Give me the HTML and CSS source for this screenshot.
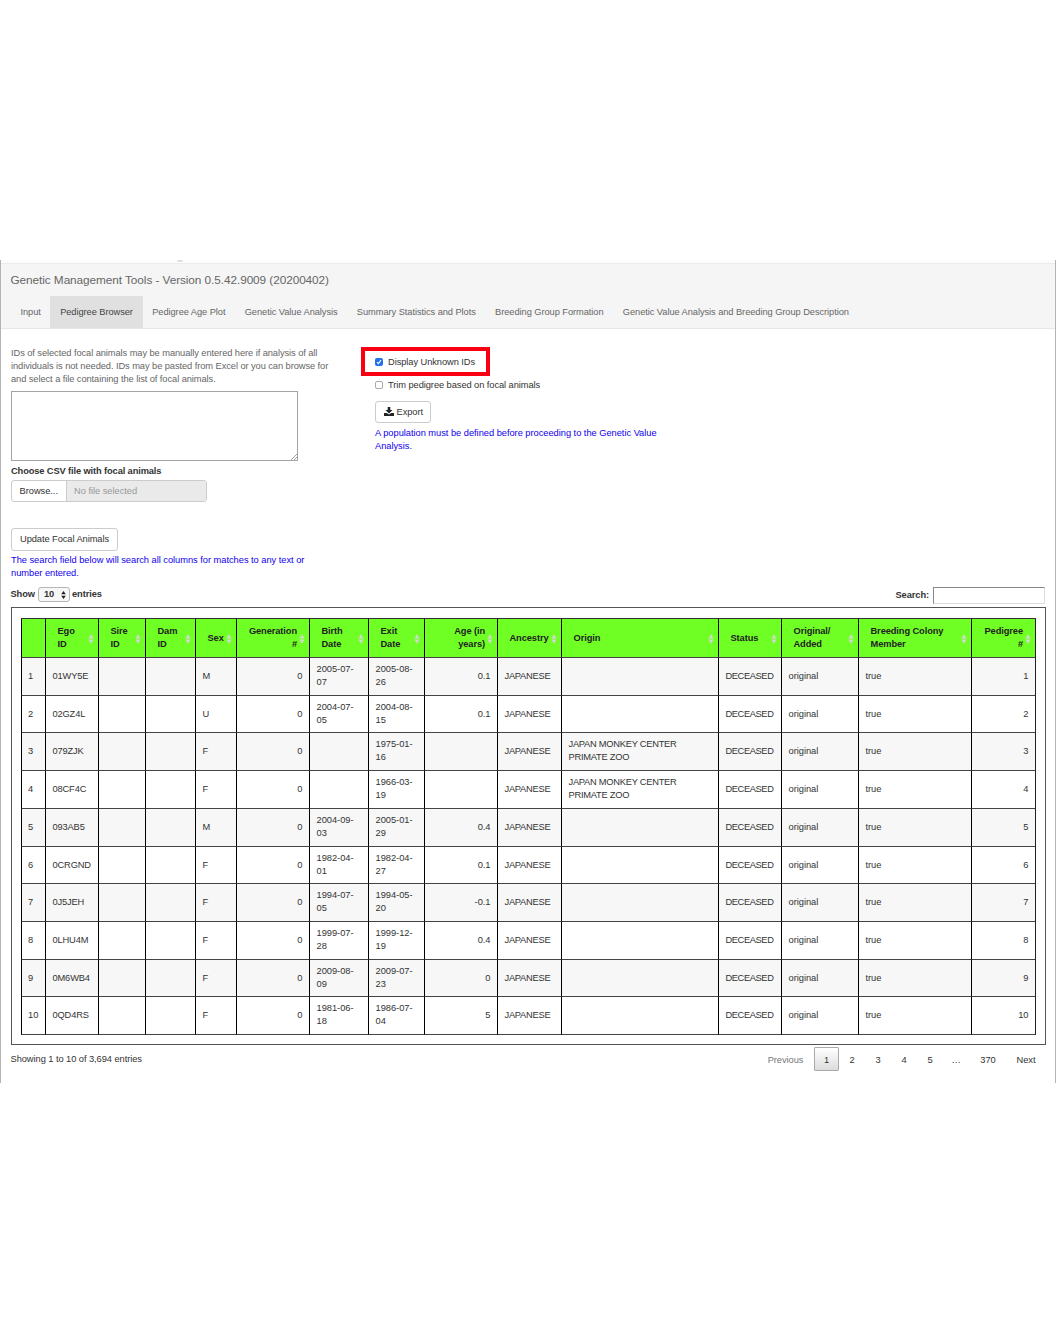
FILE: index.html
```html
<!DOCTYPE html>
<html lang="en">
<head>
<meta charset="utf-8">
<title>Genetic Management Tools</title>
<link rel="stylesheet" href="styles.css">
</head>
<body>
<svg class="defs" width="0" height="0"><symbol id="sort" viewBox="0 0 6 10"><path d="M3 .3 5.6 4.4H.4zM3 9.7 5.6 5.6H.4z" fill="#d3d8cf"/></symbol></svg>
<div class="window">
<div class="toolbar"><i></i></div>
<header class="navbar">
<div class="brand">Genetic Management Tools - Version 0.5.42.9009 (20200402)</div>
<nav class="tabs"><a>Input</a><a class="active">Pedigree Browser</a><a>Pedigree Age Plot</a><a>Genetic Value Analysis</a><a>Summary Statistics and Plots</a><a>Breeding Group Formation</a><a>Genetic Value Analysis and Breeding Group Description</a></nav>
</header>
<section class="controls">
<div class="left">
<p class="help">IDs of selected focal animals may be manually entered here if analysis of all<br>individuals is not needed. IDs may be pasted from Excel or you can browse for<br>and select a file containing the list of focal animals.</p>
<div class="textarea"><svg width="6" height="6" viewBox="0 0 6 6"><path d="M0 6 6 0M3 6 6 3" stroke="#777" stroke-width=".7"/></svg></div>
<div class="file-label">Choose CSV file with focal animals</div>
<div class="file"><span class="browse">Browse...</span><span class="filename">No file selected</span></div>
<div class="btn update">Update Focal Animals</div>
<p class="note">The search field below will search all columns for matches to any text or<br>number entered.</p>
</div>
<div class="right">
<div class="highlight"><span class="box checked"><svg width="8" height="8" viewBox="0 0 8 8"><path d="M2 4.2 3.4 5.7 6 2.2" fill="none" stroke="#fff" stroke-width="1.1"/></svg></span><span class="box-label">Display Unknown IDs</span></div>
<div class="check"><span class="box"></span><span class="box-label">Trim pedigree based on focal animals</span></div>
<div class="btn export"><svg width="10" height="9" viewBox="0 0 10 9"><path d="M3.7 0h2.6v3h2.2L5 6.4 1.5 3h2.2zM0 6h2.8L5 7.6 7.2 6H10v3H0z" fill="#222"/></svg>Export</div>
<p class="note">A population must be defined before proceeding to the Genetic Value<br>Analysis.</p>
</div>
</section>
<div class="filters">
<div class="show">Show <span class="select">10<svg width="5" height="8" viewBox="0 0 5 8"><path d="M2.5 0 4.8 3.2H.2zM2.5 8 4.8 4.8H.2z" fill="#222"/></svg></span> entries</div>
<div class="search">Search:<span class="input"></span></div>
</div>
<div class="tablebox">
<table>
<colgroup><col class="w24"><col class="w53"><col class="w47"><col class="w50"><col class="w41"><col class="w73"><col class="w59"><col class="w56"><col class="w73"><col class="w64"><col class="w157"><col class="w63"><col class="w77"><col class="w113"><col class="w64"></colgroup>
<thead><tr><th></th><th>Ego<br>ID<svg><use href="#sort"/></svg></th><th>Sire<br>ID<svg><use href="#sort"/></svg></th><th>Dam<br>ID<svg><use href="#sort"/></svg></th><th class="one">Sex<svg><use href="#sort"/></svg></th><th class="r">Generation<br>#<svg><use href="#sort"/></svg></th><th>Birth<br>Date<svg><use href="#sort"/></svg></th><th>Exit<br>Date<svg><use href="#sort"/></svg></th><th class="r">Age (in<br>years)<svg><use href="#sort"/></svg></th><th class="one">Ancestry<svg><use href="#sort"/></svg></th><th class="one">Origin<svg><use href="#sort"/></svg></th><th class="one">Status<svg><use href="#sort"/></svg></th><th>Original/<br>Added<svg><use href="#sort"/></svg></th><th>Breeding Colony<br>Member<svg><use href="#sort"/></svg></th><th class="r">Pedigree<br>#<svg><use href="#sort"/></svg></th></tr></thead>
<tbody>
<tr><td>1</td><td>01WY5E</td><td></td><td></td><td>M</td><td class="r">0</td><td>2005-07-<br>07</td><td>2005-08-<br>26</td><td class="r">0.1</td><td>JAPANESE</td><td></td><td>DECEASED</td><td>original</td><td>true</td><td class="r">1</td></tr>
<tr><td>2</td><td>02GZ4L</td><td></td><td></td><td>U</td><td class="r">0</td><td>2004-07-<br>05</td><td>2004-08-<br>15</td><td class="r">0.1</td><td>JAPANESE</td><td></td><td>DECEASED</td><td>original</td><td>true</td><td class="r">2</td></tr>
<tr><td>3</td><td>079ZJK</td><td></td><td></td><td>F</td><td class="r">0</td><td></td><td>1975-01-<br>16</td><td class="r"></td><td>JAPANESE</td><td>JAPAN MONKEY CENTER<br>PRIMATE ZOO</td><td>DECEASED</td><td>original</td><td>true</td><td class="r">3</td></tr>
<tr><td>4</td><td>08CF4C</td><td></td><td></td><td>F</td><td class="r">0</td><td></td><td>1966-03-<br>19</td><td class="r"></td><td>JAPANESE</td><td>JAPAN MONKEY CENTER<br>PRIMATE ZOO</td><td>DECEASED</td><td>original</td><td>true</td><td class="r">4</td></tr>
<tr><td>5</td><td>093AB5</td><td></td><td></td><td>M</td><td class="r">0</td><td>2004-09-<br>03</td><td>2005-01-<br>29</td><td class="r">0.4</td><td>JAPANESE</td><td></td><td>DECEASED</td><td>original</td><td>true</td><td class="r">5</td></tr>
<tr><td>6</td><td>0CRGND</td><td></td><td></td><td>F</td><td class="r">0</td><td>1982-04-<br>01</td><td>1982-04-<br>27</td><td class="r">0.1</td><td>JAPANESE</td><td></td><td>DECEASED</td><td>original</td><td>true</td><td class="r">6</td></tr>
<tr><td>7</td><td>0J5JEH</td><td></td><td></td><td>F</td><td class="r">0</td><td>1994-07-<br>05</td><td>1994-05-<br>20</td><td class="r">-0.1</td><td>JAPANESE</td><td></td><td>DECEASED</td><td>original</td><td>true</td><td class="r">7</td></tr>
<tr><td>8</td><td>0LHU4M</td><td></td><td></td><td>F</td><td class="r">0</td><td>1999-07-<br>28</td><td>1999-12-<br>19</td><td class="r">0.4</td><td>JAPANESE</td><td></td><td>DECEASED</td><td>original</td><td>true</td><td class="r">8</td></tr>
<tr><td>9</td><td>0M6WB4</td><td></td><td></td><td>F</td><td class="r">0</td><td>2009-08-<br>09</td><td>2009-07-<br>23</td><td class="r">0</td><td>JAPANESE</td><td></td><td>DECEASED</td><td>original</td><td>true</td><td class="r">9</td></tr>
<tr><td>10</td><td>0QD4RS</td><td></td><td></td><td>F</td><td class="r">0</td><td>1981-06-<br>18</td><td>1986-07-<br>04</td><td class="r">5</td><td>JAPANESE</td><td></td><td>DECEASED</td><td>original</td><td>true</td><td class="r">10</td></tr>
</tbody>
</table>
</div>
<footer class="footer">
<div>Showing 1 to 10 of 3,694 entries</div>
<div class="pages"><span class="prev">Previous</span><span class="current">1</span><span>2</span><span>3</span><span>4</span><span>5</span><span class="dots">…</span><span class="last">370</span><span class="next">Next</span></div>
</footer>
</div>
</body>
</html>
```
FILE: styles.css
```css
* { box-sizing: border-box; }
body { margin: 0; background: #fff; color: #333; font: 9.3px/13px "Liberation Sans", Arial, sans-serif; letter-spacing: -.03px; padding-top: 260px; }
p { margin: 0; }
svg { display: block; }
.defs { position: absolute; }
.window { height: 823px; border-left: 1px solid #b3b3b3; border-right: 1px solid #b3b3b3; }
.toolbar { height: 3px; background: #fcfcfc; padding-left: 176px; }
.toolbar i { display: block; width: 6px; height: 2px; border-radius: 0 0 3px 3px; background: #dcdde6; }
.navbar { height: 66px; background: #f5f5f5; border-top: 1px solid #ececec; border-bottom: 1px solid #e7e7e7; color: #666; display: flex; flex-direction: column; }
.brand { height: 32px; padding: 9px 0 0 9.5px; font-size: 11.8px; line-height: 15px; letter-spacing: -.07px; white-space: nowrap; }
.tabs { display: flex; height: 32px; font-size: 9.28px; letter-spacing: -.055px; }
.tabs a { padding: 10px 9.65px 0; white-space: nowrap; height: 32px; }
.tabs a:first-child { padding-left: 19.5px; }
.tabs .active { background: #e0e0e0; color: #444; }
.controls { display: flex; height: 256px; padding-left: 10px; }
.left { width: 350px; padding-top: 18px; }
.help { color: #666; white-space: nowrap; letter-spacing: -.075px; }
.textarea { width: 287px; height: 70px; margin-top: 5px; border: 1px solid #a3a3a3; background: #fff; display: flex; justify-content: flex-end; align-items: flex-end; }
.file-label { margin: 4px 0 2px; font-weight: bold; letter-spacing: -.12px; }
.file { display: flex; width: 196px; height: 22px; border: 1px solid #ccc; border-radius: 3px; line-height: 21px; overflow: hidden; }
.browse { width: 55px; padding-left: 7.5px; border-right: 1px solid #ccc; }
.filename { flex: 1; padding-left: 7px; background: #eaeaea; color: #999; }
.btn { height: 23px; border: 1px solid #ccc; border-radius: 3px; line-height: 20px; padding-left: 8px; white-space: nowrap; letter-spacing: -.07px; }
.update { width: 107px; margin-top: 26px; }
.note { color: #10e; margin-top: 3px; white-space: nowrap; }
.right { padding-top: 18px; }
.highlight { width: 129px; height: 29px; border: 4px solid #f80012; padding-left: 10px; display: flex; align-items: center; }
.box { width: 8px; height: 8px; margin-right: 5px; border: 1px solid #aaa; border-radius: 2px; background: #fff; }
.box-label { padding-top: 1px; letter-spacing: -.07px; }
.checked { border: 0; background: #246fec; }
.check { display: flex; align-items: center; height: 13px; margin: 2px 0 10px 14px; }
.export { width: 56px; height: 22px; margin: 0 0 4px 14px; padding-bottom: 1px; display: flex; align-items: center; }
.export svg { margin-right: 2.5px; }
.right .note { margin-left: 14px; }
.filters { height: 22px; display: flex; justify-content: space-between; padding: 0 10px 0 9.5px; font-weight: bold; letter-spacing: -.08px; }
.show { display: flex; align-items: center; height: 19px; }
.select { width: 32px; height: 15px; margin: 0 2px 0 3px; padding: 0 3px 0 5px; border: 1px solid #b5b5b5; border-radius: 3px; background: #f7f7f7; display: flex; align-items: center; justify-content: space-between; }
.search { display: flex; align-items: flex-start; padding-top: 2px; line-height: 17px; }
.input { width: 112px; height: 17px; margin-left: 4px; border: 1px solid #ddd; border-top: 1px solid #888; border-left: 1px solid #888; }
.tablebox { height: 438px; margin: 0 9px 0 9.5px; border: 1px solid #555; padding: 9.5px 9px 0 9.5px; }
table { width: 1014px; table-layout: fixed; border-collapse: separate; border-spacing: 0; border-top: 1px solid #333; border-right: 1px solid #222; }
td, th { padding: 0 0 0 6.5px; border-left: 1px solid #000; border-bottom: 1px solid #444; text-align: left; vertical-align: middle; white-space: nowrap; }
td:first-child { padding-left: 6px; }
td:nth-child(2) { letter-spacing: -.15px; }
td:nth-child(10), td:nth-child(11) { letter-spacing: -.25px; }
td:nth-child(12) { letter-spacing: -.4px; }
th { position: relative; height: 39px; padding-left: 11.5px; background: #70ff24; color: #222; font-weight: bold; letter-spacing: -.1px; }
th svg { position: absolute; right: 4px; top: 15px; width: 6px; height: 10px; }
th.one { padding-top: 1px; }
td.r { text-align: right; padding-right: 6.5px; }
th.r { text-align: right; padding-right: 12px; }
td { height: 38px; }
tbody tr:nth-child(2) td, tbody tr:nth-child(6) td, tbody tr:nth-child(9) td { height: 37px; padding-top: 1px; }
tbody tr:nth-child(odd) { background: #f7f7f7; }
.w24 { width: 24px; } .w53 { width: 53px; } .w47 { width: 47px; } .w50 { width: 50px; }
.w41 { width: 41px; } .w73 { width: 73px; } .w59 { width: 59px; } .w56 { width: 56px; }
.w64 { width: 64px; } .w157 { width: 157px; } .w63 { width: 63px; } .w77 { width: 77px; } .w113 { width: 113px; }
.footer { display: flex; justify-content: space-between; padding: 8px 10px 0 9.5px; letter-spacing: -.06px; }
.pages { display: flex; margin-top: -6px; line-height: 26px; text-align: center; }
.pages span { width: 26px; }
.pages .prev { width: 53px; color: #777; }
.pages .current { width: 25px; height: 24px; margin: 0 0 0 2px; border: 1px solid #aaa; border-radius: 1px; background: linear-gradient(#fff, #dcdcdc); line-height: 24px; }
.pages .last { width: 38px; }
.pages .next { width: 38px; }
```
